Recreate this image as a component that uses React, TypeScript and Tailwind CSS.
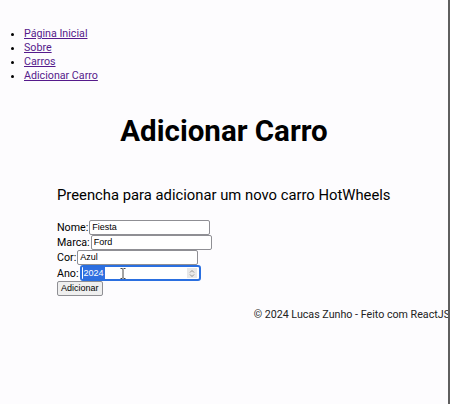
import React from "react";

const inputFont = { fontFamily: "'Liberation Sans', Arial, sans-serif" };

export default function App() {
  return (
    <div className="relative w-[450px] h-[404px] bg-[#fdfcfe] overflow-hidden" style={{ fontFamily: "Roboto, 'Liberation Sans', sans-serif" }}>
      <div className="absolute right-0 top-0 h-full w-[2px] bg-[#5f5f5f]" />
      <nav className="pt-[27px]">
        <ul className="list-disc pl-[24px] text-[10.7px] leading-[14px] text-black">
          {["Página Inicial", "Sobre", "Carros", "Adicionar Carro"].map((t) => (
            <li key={t}>
              <a href="#" className="text-[#551a8b] underline">{t}</a>
            </li>
          ))}
        </ul>
      </nav>
      <h1 className="mt-[31px] pr-[2px] text-center text-[29.5px] leading-[34px] font-bold text-black">Adicionar Carro</h1>
      <div className="pl-[57px]">
        <p className="mt-[37px] text-[14.8px] leading-[20px] text-black">Preencha para adicionar um novo carro HotWheels</p>
        <form className="mt-[15px] text-[10.7px] leading-[15px] text-black">
          <div className="flex items-center h-[15px]">
            <label>Nome:</label>
            <input defaultValue="Fiesta" className="ml-[1px] w-[121px] h-[15px] border border-[#8f8f94] rounded-[2px] bg-white px-[2px] text-[9px]" style={inputFont} />
          </div>
          <div className="flex items-center h-[15px]">
            <label>Marca:</label>
            <input defaultValue="Ford" className="ml-[1px] w-[121px] h-[15px] border border-[#8f8f94] rounded-[2px] bg-white px-[2px] text-[9px]" style={inputFont} />
          </div>
          <div className="flex items-center h-[15px]">
            <label>Cor:</label>
            <input defaultValue="Azul" className="ml-[1px] w-[121px] h-[15px] border border-[#8f8f94] rounded-[2px] bg-white px-[2px] text-[9px]" style={inputFont} />
          </div>
          <div className="flex items-center h-[16px]">
            <label>Ano:</label>
            <div className="relative ml-[1px] w-[121px] h-[16px] border-2 border-[#2a6fe0] rounded-[3px] bg-white flex items-center text-[9px]" style={inputFont}>
              <span className="ml-[1px] bg-[#2f6fe0] text-white px-[1px] leading-[12px]">2024</span>
              <svg className="absolute left-[38px] top-[1px]" width="6" height="11" viewBox="0 0 6 11">
                <path d="M0.5 0.5 H2.2 L3 1.3 L3.8 0.5 H5.5 M3 1.3 V9.7 M0.5 10.5 H2.2 L3 9.7 L3.8 10.5 H5.5" fill="none" stroke="#333" strokeWidth="0.9" />
              </svg>
              <div className="absolute right-[2px] top-[1px] w-[10px] h-[10px] bg-[#e8e8e8] flex flex-col items-center justify-center">
                <svg width="6" height="9" viewBox="0 0 6 9"><path d="M1 3.5 L3 1.5 L5 3.5 M1 5.5 L3 7.5 L5 5.5" fill="none" stroke="#777" strokeWidth="0.8" /></svg>
              </div>
            </div>
          </div>
          <div className="flex">
            <button type="button" className="h-[15px] px-[3px] border border-[#8f8f94] rounded-[2px] bg-[#efefef] text-[9px] leading-[13px]" style={inputFont}>Adicionar</button>
          </div>
        </form>
      </div>
      <footer className="mt-[12px] text-right text-[10.7px] leading-[14px] text-[#222]">© 2024 Lucas Zunho - Feito com ReactJS</footer>
    </div>
  );
}
